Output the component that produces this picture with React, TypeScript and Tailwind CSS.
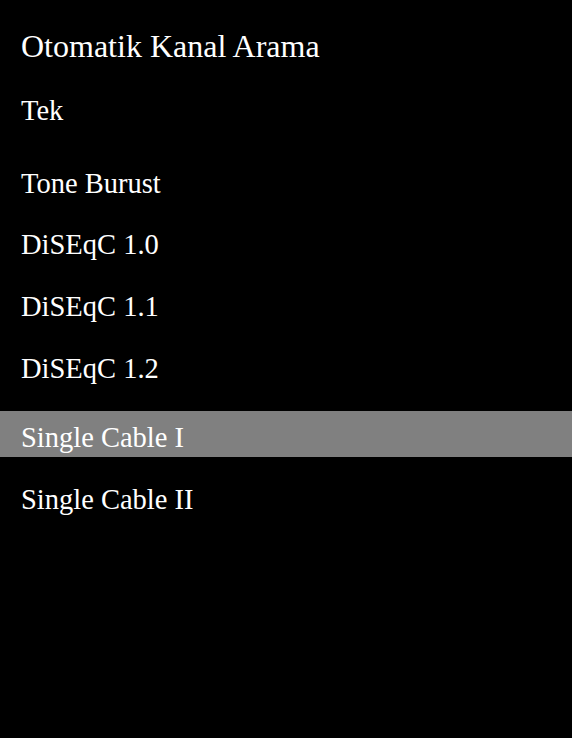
export default function App() {
  const options = [
    { label: 'Tone Burust', gap: 'mt-[27px]' },
    { label: 'DiSEqC 1.0', gap: 'mt-[15px]' },
    { label: 'DiSEqC 1.1', gap: 'mt-4' },
    { label: 'DiSEqC 1.2', gap: 'mt-4' },
    { label: 'Single Cable I', gap: 'mt-[23px]', active: true },
    { label: 'Single Cable II', gap: 'mt-4' },
  ]

  return (
    <div
      className="w-[572px] h-[738px] bg-black text-white overflow-hidden"
      style={{ fontFamily: '"Liberation Serif", "Times New Roman", serif' }}
    >
      {/* Header */}
      <h1 className="pt-[28px] px-[21px] text-[32px] leading-[36px]">Otomatik Kanal Arama</h1>

      {/* Current value */}
      <div className="mt-5 h-[46px] pt-[11px] px-[21px] text-[28.5px] leading-[32px]">Tek</div>

      {/* Options */}
      <ul className="flex flex-col">
        {options.map((opt, i) => (
          <li
            key={i}
            className={`${opt.gap} h-[46px] pt-[11px] px-[21px] text-[28.5px] leading-[32px] ${opt.active ? 'bg-[#808080]' : ''}`}
          >
            {opt.label}
          </li>
        ))}
      </ul>
    </div>
  )
}
